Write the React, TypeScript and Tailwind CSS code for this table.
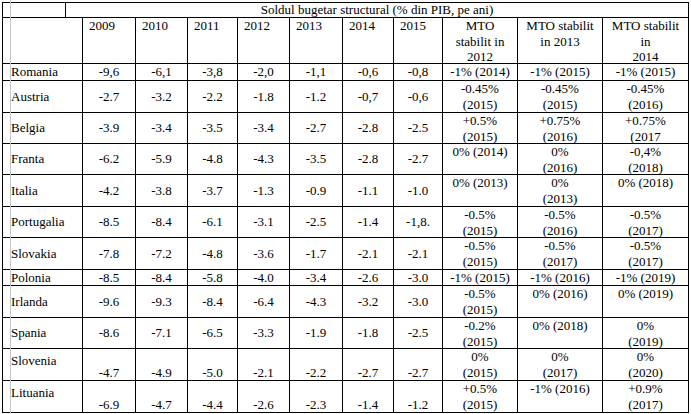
import React from 'react';

type Row = {
  name: string;
  h: string;
  pos: 'top' | 'mid' | 'low';
  vals: string[];
  mto: string[][];
};

// column widths incl. right border
const COLS = ['w-[53px]', 'w-[52px]', 'w-[50px]', 'w-[52px]', 'w-[53px]', 'w-[51px]', 'w-[49px]'];
const MTO_COLS = ['w-[75px]', 'w-[85px]', 'w-[86px]'];
const YEARS = ['2009', '2010', '2011', '2012', '2013', '2014', '2015'];

const ROWS: Row[] = [
  { name: 'Romania', h: 'h-[17px]', pos: 'top', vals: ['-9,6', '-6,1', '-3,8', '-2,0', '-1,1', '-0,6', '-0,8'], mto: [['-1% (2014)'], ['-1% (2015)'], ['-1% (2015)']] },
  { name: 'Austria', h: 'h-[32px]', pos: 'mid', vals: ['-2.7', '-3.2', '-2.2', '-1.8', '-1.2', '-0,7', '-0,6'], mto: [['-0.45%', '(2015)'], ['-0.45%', '(2015)'], ['-0.45%', '(2016)']] },
  { name: 'Belgia', h: 'h-[31px]', pos: 'mid', vals: ['-3.9', '-3.4', '-3.5', '-3.4', '-2.7', '-2.8', '-2.5'], mto: [['+0.5%', '(2015)'], ['+0.75%', '(2016)'], ['+0.75%', '(2017']] },
  { name: 'Franta', h: 'h-[31px]', pos: 'mid', vals: ['-6.2', '-5.9', '-4.8', '-4.3', '-3.5', '-2.8', '-2.7'], mto: [['0% (2014)'], ['0%', '(2016)'], ['-0,4%', '(2018)']] },
  { name: 'Italia', h: 'h-[32px]', pos: 'mid', vals: ['-4.2', '-3.8', '-3.7', '-1.3', '-0.9', '-1.1', '-1.0'], mto: [['0% (2013)'], ['0%', '(2013)'], ['0% (2018)']] },
  { name: 'Portugalia', h: 'h-[31px]', pos: 'mid', vals: ['-8.5', '-8.4', '-6.1', '-3.1', '-2.5', '-1.4', '-1,8.'], mto: [['-0.5%', '(2015)'], ['-0.5%', '(2016)'], ['-0.5%', '(2017)']] },
  { name: 'Slovakia', h: 'h-[32px]', pos: 'mid', vals: ['-7.8', '-7.2', '-4.8', '-3.6', '-1.7', '-2.1', '-2.1'], mto: [['-0.5%', '(2015)'], ['-0.5%', '(2017)'], ['-0.5%', '(2017)']] },
  { name: 'Polonia', h: 'h-[16px]', pos: 'top', vals: ['-8.5', '-8.4', '-5.8', '-4.0', '-3.4', '-2.6', '-3.0'], mto: [['-1% (2015)'], ['-1% (2016)'], ['-1% (2019)']] },
  { name: 'Irlanda', h: 'h-[32px]', pos: 'mid', vals: ['-9.6', '-9.3', '-8.4', '-6.4', '-4.3', '-3.2', '-3.0'], mto: [['-0.5%', '(2015)'], ['0% (2016)'], ['0% (2019)']] },
  { name: 'Spania', h: 'h-[31px]', pos: 'mid', vals: ['-8.6', '-7.1', '-6.5', '-3.3', '-1.9', '-1.8', '-2.5'], mto: [['-0.2%', '(2015)'], ['0% (2018)'], ['0%', '(2019)']] },
  { name: 'Slovenia', h: 'h-[32px]', pos: 'low', vals: ['-4.7', '-4.9', '-5.0', '-2.1', '-2.2', '-2.7', '-2.7'], mto: [['0%', '(2015)'], ['0%', '(2017)'], ['0%', '(2020)']] },
  { name: 'Lituania', h: 'h-[32px]', pos: 'low', vals: ['-6.9', '-4.7', '-4.4', '-2.6', '-2.3', '-1.4', '-1.2'], mto: [['+0.5%', '(2015)'], ['-1% (2016)'], ['+0.9%', '(2017)']] },
];

const cell = 'border-r border-b border-black flex flex-col shrink-0';

export default function App() {
  return (
    <div className="relative w-[691px] h-[414px] bg-white overflow-hidden [font-family:'Liberation_Serif','Times_New_Roman',serif] text-[13px] leading-[15.5px] text-black">
      <div className="absolute left-0 top-0 pt-[2px] pl-[2px]">
        <div className="border-l border-t border-black w-[687px]">
          {/* title row */}
          <div className="flex h-[15px]">
            <div className={`${cell} w-[63px]`} />
            <div className={`${cell} w-[623px] items-center leading-[14px]`}>
              Soldul bugetar structural (% din PIB, pe ani)
            </div>
          </div>

          {/* header row */}
          <div className="flex h-[46px]">
            <div className={`${cell} w-[80px]`} />
            {YEARS.map((y, i) => (
              <div key={y} className={`${cell} ${COLS[i]} pl-[6px]`}>
                {y}
              </div>
            ))}
            <div className={`${cell} ${MTO_COLS[0]} items-center text-center`}>
              <span>MTO</span>
              <span>stabilit in</span>
              <span>2012</span>
            </div>
            <div className={`${cell} ${MTO_COLS[1]} items-center text-center`}>
              <span>MTO stabilit</span>
              <span>in 2013</span>
            </div>
            <div className={`${cell} ${MTO_COLS[2]} items-center text-center`}>
              <span>MTO stabilit</span>
              <span>in</span>
              <span>2014</span>
            </div>
          </div>

          {ROWS.map((r) => {
            const valAlign =
              r.pos === 'mid' ? 'justify-center' : r.pos === 'low' ? 'justify-end' : 'justify-start';
            const nameAlign =
              r.pos === 'mid' ? 'justify-center' : r.pos === 'low' ? 'justify-start pt-[4px]' : 'justify-start';
            return (
              <div key={r.name} className={`flex ${r.h}`}>
                <div className={`${cell} w-[80px] pl-[8px] ${nameAlign}`}>{r.name}</div>
                {r.vals.map((v, i) => (
                  <div key={i} className={`${cell} ${COLS[i]} items-center ${valAlign}`}>
                    {v}
                  </div>
                ))}
                {r.mto.map((lines, i) => (
                  <div key={i} className={`${cell} ${MTO_COLS[i]} items-center`}>
                    {lines.map((l, j) => (
                      <span key={j} className="whitespace-nowrap">
                        {l}
                      </span>
                    ))}
                  </div>
                ))}
              </div>
            );
          })}
        </div>
      </div>

      {/* word text-boundary guide */}
      <div className="absolute left-[10px] top-0 w-px h-[414px] bg-[#c6c6c6]" />
    </div>
  );
}
